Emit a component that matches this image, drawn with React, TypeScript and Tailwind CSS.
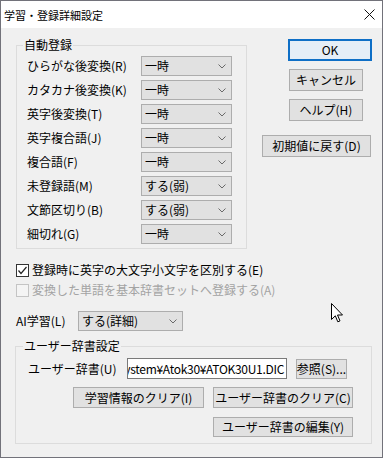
import React from "react";

const Chevron = () => (
  <svg width="8" height="5" viewBox="0 0 8 5" className="shrink-0">
    <polyline points="0.5,0.5 4,4 7.5,0.5" fill="none" stroke="#6a6a6a" strokeWidth="1" />
  </svg>
);

const Combo = ({ value, w }: { value: string; w: string }) => (
  <div className={`${w} h-[20px] border border-[#adadad] bg-[#e1e1e1] flex items-center justify-between pl-[3px] pr-[5px]`}>
    <span>{value}</span>
    <Chevron />
  </div>
);

const Btn = ({ children, cls }: { children: React.ReactNode; cls: string }) => (
  <div className={`${cls} border border-[#adadad] bg-[#e1e1e1] flex items-center justify-center whitespace-nowrap`}>
    {children}
  </div>
);

const rows: [string, string][] = [
  ["ひらがな後変換(R)", "一時"],
  ["カタカナ後変換(K)", "一時"],
  ["英字後変換(T)", "一時"],
  ["英字複合語(J)", "一時"],
  ["複合語(F)", "一時"],
  ["未登録語(M)", "する(弱)"],
  ["文節区切り(B)", "する(弱)"],
  ["細切れ(G)", "一時"],
];

export default function App() {
  return (
    <div className="w-[385px] h-[459px] bg-white font-['Noto_Sans_CJK_JP',sans-serif] text-[12px] leading-[14px] text-black">
      <div className="relative w-[383px] h-[458px] border border-[#72727a] bg-[#f0f0f0] flex flex-col">
        {/* Title bar */}
        <div className="h-[27px] bg-white flex items-center justify-between pl-[3px] pr-[7px] shrink-0">
          <span className="text-[11px]">学習・登録詳細設定</span>
          <svg width="11" height="11" viewBox="0 0 11 11">
            <line x1="0.5" y1="0.5" x2="10.5" y2="10.5" stroke="#111" strokeWidth="1" />
            <line x1="10.5" y1="0.5" x2="0.5" y2="10.5" stroke="#111" strokeWidth="1" />
          </svg>
        </div>

        {/* Body */}
        <div className="flex flex-col pl-[15px]">
          <div className="flex pt-[10px]">
            <fieldset className="w-[231px] border border-[#dcdcdc] px-0 pt-[4px] pb-[4px] m-0">
              <legend className="ml-[6px] px-[1px] leading-[14px]">自動登録</legend>
              <div className="flex flex-col gap-[4px]">
                {rows.map(([l, v]) => (
                  <div key={l} className="flex items-center h-[20px] pl-[10px]">
                    <span className="w-[114px] whitespace-nowrap">{l}</span>
                    <Combo value={v} w="w-[91px]" />
                  </div>
                ))}
              </div>
            </fieldset>
            <div className="flex flex-col items-start ml-[15px] pt-[1px]">
              <div className="ml-[26px] w-[84px] h-[22px] border-2 border-[#0f6fc6] bg-[#e5eef7] flex items-center justify-center">
                OK
              </div>
              <Btn cls="ml-[27px] mt-[8px] w-[74px] h-[22px]">キャンセル</Btn>
              <Btn cls="ml-[27px] mt-[8px] w-[74px] h-[22px]">ヘルプ(H)</Btn>
              <Btn cls="mt-[14px] w-[109px] h-[22px]">初期値に戻す(D)</Btn>
            </div>
          </div>

          {/* Checkboxes */}
          <div className="flex flex-col mt-[11px]">
            <div className="flex items-center h-[20px] gap-[3px]">
              <div className="w-[13px] h-[13px] border border-[#333] bg-white flex items-center justify-center">
                <svg width="11" height="11" viewBox="0 0 11 11">
                  <polyline points="1.5,5.5 4,8.5 9.5,2" fill="none" stroke="#222" strokeWidth="1.2" />
                </svg>
              </div>
              <span>登録時に英字の大文字小文字を区別する(E)</span>
            </div>
            <div className="flex items-center h-[20px] gap-[3px] text-[#a3a3a3]">
              <div className="w-[13px] h-[13px] border border-[#c4c4c4] bg-[#f4f4f4]" />
              <span>変換した単語を基本辞書セットへ登録する(A)</span>
            </div>
          </div>

          {/* AI */}
          <div className="flex items-center h-[20px] mt-[11px]">
            <span className="w-[62px] whitespace-nowrap">AI学習(L)</span>
            <Combo value="する(詳細)" w="w-[105px]" />
          </div>

          {/* User dictionary group */}
          <fieldset className="ml-[-1px] w-[357px] border border-[#dcdcdc] px-0 pt-[5px] pb-[6px] mt-[8px] m-0">
            <legend className="ml-[7px] px-[1px] leading-[14px]">ユーザー辞書設定</legend>
            <div className="flex flex-col">
              <div className="flex items-center h-[21px] pl-[12px]">
                <span className="w-[99px] whitespace-nowrap">ユーザー辞書(U)</span>
                <div className="w-[160px] h-[21px] border border-[#7a7a7a] bg-white flex items-center justify-end overflow-hidden whitespace-nowrap pr-[2px]">
                  <span className="tracking-[-0.3px]">System¥Atok30¥ATOK30U1.DIC</span>
                </div>
                <Btn cls="ml-[9px] w-[51px] h-[20px]">参照(S)...</Btn>
              </div>
              <div className="flex justify-end pr-[18px] mt-[8px] gap-[9px]">
                <Btn cls="w-[131px] h-[21px]">学習情報のクリア(I)</Btn>
                <Btn cls="w-[140px] h-[21px]">ユーザー辞書のクリア(C)</Btn>
              </div>
              <div className="flex justify-end pr-[18px] mt-[9px]">
                <Btn cls="w-[140px] h-[20px]">ユーザー辞書の編集(Y)</Btn>
              </div>
            </div>
          </fieldset>
        </div>

        {/* Mouse cursor overlay */}
        <svg className="absolute left-[330px] top-[302px]" width="13" height="21" viewBox="0 0 13 21">
          <path d="M0.5 0.5 L0.5 16.5 L4.3 12.8 L6.8 18.8 L9 17.9 L6.5 12 L11.5 12 Z" fill="white" stroke="#000" strokeWidth="1" strokeLinejoin="miter" />
        </svg>
      </div>
    </div>
  );
}
